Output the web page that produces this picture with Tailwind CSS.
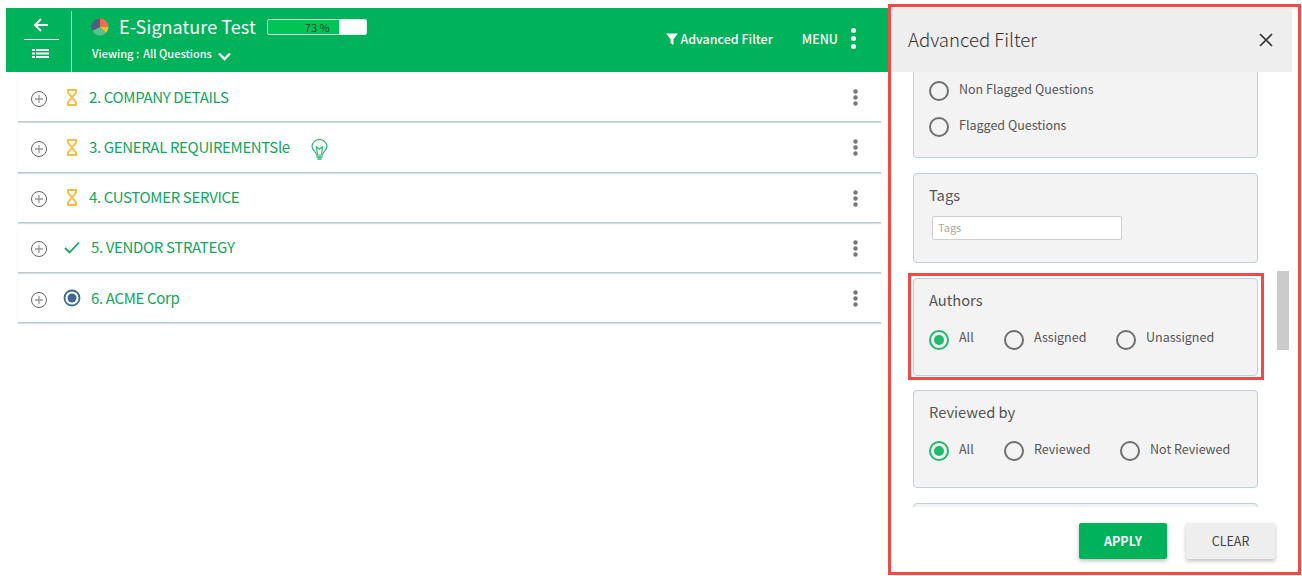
<!DOCTYPE html>
<html lang="en">
<head>
    <meta charset="UTF-8">
    <title>E-Signature Test</title>
    <script src="https://cdn.jsdelivr.net/npm/@tailwindcss/browser@4"></script>
</head>
<body class="bg-white h-[576px] overflow-hidden font-['Noto_Sans_CJK_SC','Source_Sans_Pro',sans-serif] text-[#444]">
<div class="relative flex pl-[6px] pt-2 h-[576px]">

    <!-- left side -->
    <div class="w-[882px] shrink-0">
        <header class="h-16 bg-[#00b259] flex items-center text-white">
            <div class="w-[66px] h-[61px] mt-[3px] pl-1 border-r border-white/80 flex flex-col items-center shrink-0">
                <div class="w-[35px] h-[29px] border-b border-white flex items-center justify-center ml-[1px]">
                    <svg width="16" height="16" viewBox="0 0 16 16" fill="none" stroke="white" stroke-width="2"><path d="M15 8H2M8 2L2 8l6 6"/></svg>
                </div>
                <svg class="mt-[9px]" width="17" height="9" viewBox="0 0 17 9" fill="white"><rect x="0" y="0" width="3" height="2"/><rect x="4" y="0" width="13" height="2"/><rect x="0" y="3.500" width="3" height="2"/><rect x="4" y="3.500" width="13" height="2"/><rect x="0" y="7" width="3" height="2"/><rect x="4" y="7" width="13" height="2"/></svg>
            </div>
            <div class="pl-[19px] h-full shrink-0">
                <div class="flex items-center h-[27px] mt-[5px]">
                    <svg width="18" height="18" viewBox="0 0 18 18"><path d="M9 9L9 0.500A8.500 8.500 0 0 0 1.500 13z" fill="#4d5f80"/><path d="M9 9L9 0.500A8.500 8.500 0 0 1 17.500 9z" fill="#f26b4f"/><path d="M9 9L17.500 9A8.500 8.500 0 0 1 15 15z" fill="#fbbb2c"/><path d="M9 9L15 15A8.500 8.500 0 0 1 1.500 13z" fill="#5cc08a"/></svg>
                    <span class="ml-[10px] text-[18px] leading-[27px] tracking-[0.05px]">E-Signature Test</span>
                    <div class="ml-[11px] w-[100px] h-[16px] bg-white rounded-[2px] border border-[#d7f2e2] overflow-hidden relative">
                        <div class="h-full w-[71px] bg-[#00c456] flex justify-center">
                            <span class="text-[11px] leading-[14px] text-[#124a2b] pl-[28px]">73&nbsp;%</span>
                        </div>
                    </div>
                </div>
                <div class="flex items-center h-[20px] mt-[3px] pl-[1px] text-[11px] font-medium leading-[20px]">
                    <span class="-mt-[1px]">Viewing :</span>
                    <span class="ml-1">All Questions</span>
                    <svg class="ml-[6px] mt-[7px]" width="13" height="9" viewBox="0 0 13 9" fill="none" stroke="white" stroke-width="2.400"><path d="M1 1.500l5.500 5.500 5.500-5.500"/></svg>
                </div>
            </div>
            <div class="ml-auto flex items-center pr-8 -mt-[3px]">
                <svg width="12" height="12" viewBox="0 0 12 12" fill="white"><path d="M0 0.500h12L7.500 6v6L4.500 10V6z"/></svg>
                <span class="ml-[2px] text-[12.500px] font-medium leading-5">Advanced Filter</span>
                <span class="ml-[29px] text-[12.500px] font-medium leading-5">MENU</span>
                <div class="ml-[13px] flex flex-col gap-[3px]">
                    <i class="block w-[5px] h-[5px] rounded-full bg-white"></i>
                    <i class="block w-[5px] h-[5px] rounded-full bg-white"></i>
                    <i class="block w-[5px] h-[5px] rounded-full bg-white"></i>
                </div>
            </div>
        </header>

        <ul class="ml-3 w-[863px] text-[#11a75c] text-[15px] tracking-[-0.35px] leading-5">
            <li class="h-[50.250px] flex items-center border-b border-[#bccad1] shadow-[0_1px_1px_#d5dfe3] pl-3 pr-[23px]">
                <svg width="18" height="18" viewBox="0 0 18 18" fill="none" class="mt-1"><circle cx="9" cy="9" r="7.500" stroke="#666"/><path d="M9 5v8M5 9h8" stroke="#999" stroke-width="1.300"/></svg>
                <svg class="ml-[18px] mt-[1px]" width="12" height="17" viewBox="0 0 12 17" fill="none" stroke="#fdbd3e" stroke-width="2"><path d="M1 1h10M1 16h10M2 1v2.500L10 13.500V16M10 1v2.500L2 13.500V16"/></svg>
                <span class="ml-[11px]">2. COMPANY DETAILS</span>
                <svg class="ml-auto mt-[2px]" width="5" height="17" viewBox="0 0 5 17" fill="#777"><circle cx="2.500" cy="2.500" r="2.200"/><circle cx="2.500" cy="8.500" r="2.200"/><circle cx="2.500" cy="14.500" r="2.200"/></svg>
            </li>
            <li class="h-[50.250px] flex items-center border-b border-[#bccad1] shadow-[0_1px_1px_#d5dfe3] pl-3 pr-[23px]">
                <svg width="18" height="18" viewBox="0 0 18 18" fill="none" class="mt-1"><circle cx="9" cy="9" r="7.500" stroke="#666"/><path d="M9 5v8M5 9h8" stroke="#999" stroke-width="1.300"/></svg>
                <svg class="ml-[18px] mt-[1px]" width="12" height="17" viewBox="0 0 12 17" fill="none" stroke="#fdbd3e" stroke-width="2"><path d="M1 1h10M1 16h10M2 1v2.500L10 13.500V16M10 1v2.500L2 13.500V16"/></svg>
                <span class="ml-[11px]">3. GENERAL REQUIREMENTSle</span>
                <svg class="ml-[21px] mt-[6px]" width="17" height="22" viewBox="0 0 17 22" fill="none" stroke="#1fb56b" stroke-width="1.100"><path d="M5.500 16c0-3-4.500-5-4.500-8.500a7.500 7 0 0 1 15 0C16 11 11.500 13 11.500 16z"/><path d="M6.500 15.500L5.500 8l3 2 3-2-1 7.500"/><path d="M5.500 18h6M6.500 20h4" stroke-width="1.500"/></svg>
                <svg class="ml-auto mt-[2px]" width="5" height="17" viewBox="0 0 5 17" fill="#777"><circle cx="2.500" cy="2.500" r="2.200"/><circle cx="2.500" cy="8.500" r="2.200"/><circle cx="2.500" cy="14.500" r="2.200"/></svg>
            </li>
            <li class="h-[50.250px] flex items-center border-b border-[#bccad1] shadow-[0_1px_1px_#d5dfe3] pl-3 pr-[23px]">
                <svg width="18" height="18" viewBox="0 0 18 18" fill="none" class="mt-1"><circle cx="9" cy="9" r="7.500" stroke="#666"/><path d="M9 5v8M5 9h8" stroke="#999" stroke-width="1.300"/></svg>
                <svg class="ml-[18px] mt-[1px]" width="12" height="17" viewBox="0 0 12 17" fill="none" stroke="#fdbd3e" stroke-width="2"><path d="M1 1h10M1 16h10M2 1v2.500L10 13.500V16M10 1v2.500L2 13.500V16"/></svg>
                <span class="ml-[11px]">4. CUSTOMER SERVICE</span>
                <svg class="ml-auto mt-[2px]" width="5" height="17" viewBox="0 0 5 17" fill="#777"><circle cx="2.500" cy="2.500" r="2.200"/><circle cx="2.500" cy="8.500" r="2.200"/><circle cx="2.500" cy="14.500" r="2.200"/></svg>
            </li>
            <li class="h-[50.250px] flex items-center border-b border-[#bccad1] shadow-[0_1px_1px_#d5dfe3] pl-3 pr-[23px]">
                <svg width="18" height="18" viewBox="0 0 18 18" fill="none" class="mt-1"><circle cx="9" cy="9" r="7.500" stroke="#666"/><path d="M9 5v8M5 9h8" stroke="#999" stroke-width="1.300"/></svg>
                <svg class="ml-4 mt-[1px]" width="16" height="13" viewBox="0 0 16 13" fill="none" stroke="#11a75c" stroke-width="1.800"><path d="M1 7l4.500 4.500L15 1.500"/></svg>
                <span class="ml-[11px]">5. VENDOR STRATEGY</span>
                <svg class="ml-auto mt-[2px]" width="5" height="17" viewBox="0 0 5 17" fill="#777"><circle cx="2.500" cy="2.500" r="2.200"/><circle cx="2.500" cy="8.500" r="2.200"/><circle cx="2.500" cy="14.500" r="2.200"/></svg>
            </li>
            <li class="h-[50.250px] flex items-center border-b border-[#bccad1] shadow-[0_1px_1px_#d5dfe3] pl-3 pr-[23px]">
                <svg width="18" height="18" viewBox="0 0 18 18" fill="none" class="mt-1"><circle cx="9" cy="9" r="7.500" stroke="#666"/><path d="M9 5v8M5 9h8" stroke="#999" stroke-width="1.300"/></svg>
                <svg class="ml-[15px]" width="18" height="18" viewBox="0 0 18 18"><circle cx="9" cy="9" r="7.500" fill="none" stroke="#3d6a92" stroke-width="1.800"/><circle cx="9" cy="9" r="4.500" fill="#3d6a92"/></svg>
                <span class="ml-[10px]">6. ACME Corp</span>
                <svg class="ml-auto mt-[2px]" width="5" height="17" viewBox="0 0 5 17" fill="#777"><circle cx="2.500" cy="2.500" r="2.200"/><circle cx="2.500" cy="8.500" r="2.200"/><circle cx="2.500" cy="14.500" r="2.200"/></svg>
            </li>
        </ul>
    </div>

    <!-- advanced filter panel -->
    <aside class="w-[404px] shrink-0 flex flex-col h-[562px]">
        <div class="h-16 bg-[#eeeeee] flex items-center justify-between pl-5 pr-[19px] shrink-0">
            <h2 class="text-[18.600px] font-light leading-6 text-[#333] -mt-[3px]">Advanced Filter</h2>
            <svg width="14" height="14" viewBox="0 0 14 14" fill="none" stroke="#333" stroke-width="1.700"><path d="M1 1l12 12M13 1L1 13"/></svg>
        </div>
        <div class="h-[435px] overflow-hidden pl-[25px] text-[12.500px] leading-5 text-[#555] shrink-0">
            <div class="w-[345px] h-[116px] -mt-[30px] bg-[#f3f3f3] border border-[#bdd0d8] rounded-[4px] pt-[38px] pl-[15px]">
                <div class="flex items-center h-5">
                    <i class="block w-5 h-5 rounded-full border-2 border-[#6f6f6f]"></i>
                    <span class="ml-[10px] -mt-[4px]">Non Flagged Questions</span>
                </div>
                <div class="flex items-center h-5 mt-4">
                    <i class="block w-5 h-5 rounded-full border-2 border-[#6f6f6f]"></i>
                    <span class="ml-[10px] -mt-[4px]">Flagged Questions</span>
                </div>
            </div>

            <div class="w-[345px] h-[90px] mt-[15px] bg-[#f3f3f3] border border-[#bdd0d8] rounded-[4px] pt-[11px] pl-[15px]">
                <h3 class="text-[14.700px] leading-5">Tags</h3>
                <input placeholder="Tags" class="block mt-[11px] ml-[3px] w-[190px] h-6 bg-white border border-[#cfcfcf] rounded-[2px] px-[5px] pb-[2px] text-[11px] placeholder:text-[#aaa] outline-none">
            </div>

            <div class="w-[345px] h-[98px] mt-[15px] bg-[#f3f3f3] border border-[#bdd0d8] rounded-[4px] pt-[11px] pl-[15px]">
                <h3 class="text-[14.700px] leading-5">Authors</h3>
                <div class="flex items-center h-5 mt-5">
                    <i class="relative block w-5 h-5 rounded-full border-2 border-[#1fba6b] after:absolute after:inset-[3px] after:rounded-full after:bg-[#1fba6b]"></i>
                    <span class="ml-[10px] -mt-[7px] w-[45px]">All</span>
                    <i class="block w-5 h-5 rounded-full border-2 border-[#6f6f6f]"></i>
                    <span class="ml-[10px] -mt-[7px] w-[82px]">Assigned</span>
                    <i class="block w-5 h-5 rounded-full border-2 border-[#6f6f6f]"></i>
                    <span class="ml-[10px] -mt-[7px]">Unassigned</span>
                </div>
            </div>

            <div class="w-[345px] h-[98px] mt-[14px] bg-[#f3f3f3] border border-[#bdd0d8] rounded-[4px] pt-[11px] pl-[15px]">
                <h3 class="text-[14.700px] leading-5">Reviewed by</h3>
                <div class="flex items-center h-5 mt-[19px]">
                    <i class="relative block w-5 h-5 rounded-full border-2 border-[#1fba6b] after:absolute after:inset-[3px] after:rounded-full after:bg-[#1fba6b]"></i>
                    <span class="ml-[10px] -mt-[5px] w-[45px]">All</span>
                    <i class="block w-5 h-5 rounded-full border-2 border-[#6f6f6f]"></i>
                    <span class="ml-[10px] -mt-[5px] w-[86px]">Reviewed</span>
                    <i class="block w-5 h-5 rounded-full border-2 border-[#6f6f6f]"></i>
                    <span class="ml-[10px] -mt-[5px]">Not Reviewed</span>
                </div>
            </div>

            <div class="w-[345px] h-20 mt-[15px] bg-[#f3f3f3] border border-[#bdd0d8] rounded-[4px]"></div>
        </div>
        <div class="flex justify-end gap-[19px] pt-4 pr-[17px]">
            <button class="w-[88px] h-9 bg-[#00b259] text-white text-[12.500px] font-bold rounded-[2px] shadow-[0_2px_4px_rgba(0,0,0,0.25)]">APPLY</button>
            <button class="w-[89px] h-9 bg-[#eeeeee] text-[#444] text-[12.500px] rounded-[2px] shadow-[0_2px_4px_rgba(0,0,0,0.25)]">CLEAR</button>
        </div>
    </aside>

    <!-- scrollbar thumb and callout frames lying over the page -->
    <div class="absolute left-[1277px] top-[271px] w-3 h-[79px] bg-[#cbcbcb]"></div>
    <div class="absolute left-[888px] top-[4px] w-[413px] h-[571px] border-[3px] border-[#ef4a45] pointer-events-none"></div>
    <div class="absolute left-[908px] top-[273px] w-[356px] h-[107px] border-[3px] border-[#ef4a45] pointer-events-none"></div>
</div>
</body>
</html>
